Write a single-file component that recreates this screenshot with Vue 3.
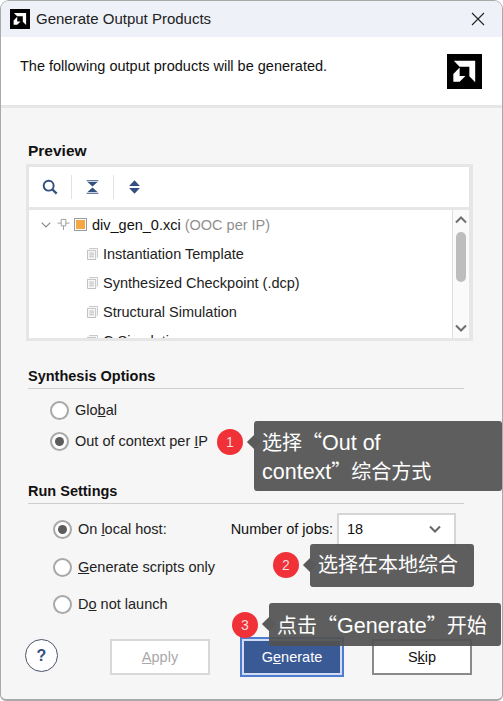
<template>
  <div class="win">
    <div class="titlebar">
      <svg class="logo-small" viewBox="0 0 36 36"><rect width="36" height="36" fill="#000"/><path d="M7 7h22v22l-6-6V13H13zM6.500 20.500L13 14v8.500h6l-6 6H6.500z" fill="#fff"/></svg>
      <span class="title">Generate Output Products</span>
      <svg class="close" viewBox="0 0 14 14"><path d="M1 1l12 12M13 1L1 13" stroke="#222" stroke-width="1.100" fill="none"/></svg>
    </div>
    <div class="header">
      <span>The following output products will be generated.</span>
      <svg class="logo-big" viewBox="0 0 36 36"><rect width="36" height="36" fill="#000"/><path d="M7 7h22v22l-6-6V13H13zM6.500 20.500L13 14v8.500h6l-6 6H6.500z" fill="#fff"/></svg>
    </div>

    <div class="body">
      <h3 class="preview-h">Preview</h3>
      <div class="panel">
        <div class="toolbar">
          <svg class="tool" viewBox="0 0 18 18"><circle cx="7.500" cy="7.500" r="5.600" fill="none" stroke="#34507f" stroke-width="2.200"/><path d="M11.500 11.500l5 5" stroke="#34507f" stroke-width="2.600"/></svg>
          <i class="tsep"></i>
          <svg class="tool narrow" viewBox="0 0 18 18"><path d="M2 1.500h14M2 16.500h14" stroke="#34507f" stroke-width="1.400"/><path d="M3 3h12L9 8.300zM9 9.700l6 5.300H3z" fill="#34507f"/></svg>
          <i class="tsep"></i>
          <svg class="tool narrow" viewBox="0 0 18 18"><path d="M9 1l6.500 6.800h-13zM2.500 10.200h13L9 17z" fill="#34507f"/></svg>
        </div>
        <div class="tree">
          <div class="rows">
            <div class="row root">
              <svg class="chev" viewBox="0 0 10 6"><path d="M.700.700L5 5l4.300-4.300" fill="none" stroke="#8a8a8a" stroke-width="1.200"/></svg>
              <svg class="pin" viewBox="0 0 14 14"><path d="M4.500 1.500h5v7h-5zM7 8.500V13M.500 5.500h4M9.500 5.500h4" fill="none" stroke="#9a9a9a"/></svg>
              <span class="ipbox"><i></i></span>
              <span>div_gen_0.xci <em>(OOC per IP)</em></span>
            </div>
            <div v-for="item in products" :key="item" class="row child">
              <svg class="doc" viewBox="0 0 12 13"><path d="M2.500.500h9v10" fill="none" stroke="#c4c4c4"/><path d="M.500 2.500h9v10h-9z" fill="#f7f7f7" stroke="#b9b9b9"/><path d="M2.500 5.500h5M2.500 7.500h5M2.500 9.500h5" stroke="#b9b9b9"/></svg>
              <span>{{ item }}</span>
            </div>
          </div>
          <div class="scroll">
            <svg viewBox="0 0 12 8"><path d="M1 6.500L6 1.500l5 5" fill="none" stroke="#6e6e6e" stroke-width="2"/></svg>
            <div class="thumb"></div>
            <svg class="down" viewBox="0 0 12 8"><path d="M1 1.500l5 5 5-5" fill="none" stroke="#6e6e6e" stroke-width="2"/></svg>
          </div>
        </div>
      </div>

      <h3 class="section synth">Synthesis Options</h3>
      <div class="options">
        <label class="radio"><i class="dot"></i><span>Glo<u>b</u>al</span></label>
        <label class="radio"><i class="dot on"></i><span>Out of context per <u>I</u>P</span></label>
      </div>

      <h3 class="section run">Run Settings</h3>
      <div class="run-grid">
        <div class="run-row">
          <label class="radio"><i class="dot on"></i><span>On <u>l</u>ocal host:</span></label>
          <div class="jobs">
            <span>Number of jobs:</span>
            <div class="select">18
              <svg viewBox="0 0 12 8"><path d="M1 1.500l5 5 5-5" fill="none" stroke="#666" stroke-width="2"/></svg>
            </div>
          </div>
        </div>
        <label class="radio second"><i class="dot"></i><span><u>G</u>enerate scripts only</span></label>
        <label class="radio third"><i class="dot"></i><span>D<u>o</u> not launch</span></label>
      </div>

      <div class="footer">
        <div class="help">?</div>
        <button class="btn apply"><u>A</u>pply</button>
        <button class="btn primary">G<u>e</u>nerate</button>
        <button class="btn skip">S<u>k</u>ip</button>
      </div>
    </div>

    <div class="badge b1">1</div>
    <div class="note n1">选择<span class="q open">“</span><span class="en">Out of context</span><span class="q">”</span>综合方式</div>
    <div class="badge b2">2</div>
    <div class="note n2">选择在本地综合</div>
    <div class="badge b3">3</div>
    <div class="note n3">点击<span class="q open">“</span><span class="en">Generate</span><span class="q">”</span>开始</div>
  </div>
</template>

<script setup>
const products = [
  'Instantiation Template',
  'Synthesized Checkpoint (.dcp)',
  'Structural Simulation',
  'C Simulation',
]
</script>

<style>
html, body { margin: 0; background: #fff; }
</style>

<style scoped>
* { box-sizing: border-box; }

.win {
  position: relative;
  width: 503px;
  height: 701px;
  overflow: hidden;
  border: 1px solid #a9a9a9;
  border-bottom-width: 2px;
  border-radius: 9px 9px 6px 6px;
  background: #f6f6f6;
  font-family: "Liberation Sans", Arial, sans-serif;
  font-size: 14.5px;
  color: #111;
  display: flex;
  flex-direction: column;
}

.titlebar {
  height: 36px;
  flex: none;
  background: #eef1f7;
  display: flex;
  align-items: center;
  padding: 0 17px 0 9px;
  gap: 6px;
}
.logo-small { width: 20px; height: 20px; }
.title { flex: 1; font-size: 15px; color: #222; margin-top: -2px; }
.close { width: 14px; height: 14px; }

.header {
  height: 71px;
  flex: none;
  background: #fff;
  border-bottom: 3px solid #e6e6e6;
  display: flex;
  justify-content: space-between;
  padding: 21px 20px 0 19px;
}
.logo-big { width: 35px; height: 35px; margin-top: -4px; }

.body { flex: 1; padding: 0 26px; display: flex; flex-direction: column; }

h3 { margin: 0; font-size: 14.5px; font-weight: 700; }
.preview-h { margin: 35px 0 0 1px; line-height: 16px; font-size: 15.500px; }

.panel {
  margin: 5px 0 0 -1px;
  width: 447px;
  height: 177px;
  flex: none;
  border: 3px solid #e6e6e6;
  border-right-width: 4px;
  background: #fff;
}
.toolbar {
  height: 43px;
  border-bottom: 3px solid #e6e6e6;
  display: flex;
  align-items: center;
  padding-left: 13px;
  gap: 13px;
}
.tool { width: 16px; height: 16px; }
.tool.narrow { width: 15px; }
.tsep { width: 1px; height: 24px; background: #e2e2e2; }

.tree { display: flex; height: 128px; overflow: hidden; }
.rows { flex: 1; }
.row { height: 29px; display: flex; align-items: center; white-space: nowrap; }
.root { padding-left: 12px; }
.chev { width: 10px; height: 6px; margin-right: 6px; }
.pin { width: 13px; height: 13px; margin-right: 4px; }
.ipbox {
  width: 13px;
  height: 13px;
  border: 1px solid #9c9c9c;
  margin-right: 5px;
  background: #fff;
  padding: 1px;
}
.ipbox i { display: block; width: 9px; height: 9px; background: #f5a742; }
em { font-style: normal; color: #8f8f8f; }
.child { padding-left: 58px; gap: 5px; color: #222; }
.doc { width: 11px; height: 12px; flex: none; }

.scroll {
  width: 17px;
  flex: none;
  border-left: 1px solid #dedede;
  background: #fafafa;
  display: flex;
  flex-direction: column;
  align-items: center;
  padding-top: 6px;
}
.scroll svg { width: 12px; height: 8px; flex: none; }
.thumb { width: 10px; height: 50px; margin-top: 8px; border-radius: 5px; background: #bdbdbd; }
.scroll .down { margin-top: 42px; }

.section {
  line-height: 16px;
  width: 436px;
  margin-left: 1px;
  padding-bottom: 4px;
  border-bottom: 1px solid #cfcfcf;
}
.synth { margin-top: 27px; }
.run { margin-top: 32px; }

.options { display: flex; flex-direction: column; gap: 11px; margin: 11px 0 0 23px; }

.radio { display: flex; align-items: center; gap: 6px; height: 20px; white-space: nowrap; color: #222; }
.dot {
  width: 19px;
  height: 19px;
  flex: none;
  border: 2px solid #a8a8a8;
  border-radius: 50%;
  background: #fff;
  display: flex;
  align-items: center;
  justify-content: center;
}
.dot.on::after {
  content: "";
  width: 9px;
  height: 9px;
  border-radius: 50%;
  background: #5c5c5c;
}

.run-grid { margin-left: 26px; display: flex; flex-direction: column; }
.run-row { display: flex; align-items: center; justify-content: space-between; width: 403px; margin-top: 8px; height: 34px; }
.jobs { display: flex; align-items: center; gap: 4px; }
.select {
  width: 119px;
  height: 33px;
  background: #fff;
  border: 2px solid #d6d6d6;
  display: flex;
  align-items: center;
  justify-content: space-between;
  padding: 0 13px 0 8px;
}
.select svg { width: 12px; height: 8px; }
.second { margin-top: 11px; }
.third { margin-top: 17px; }

.footer { display: flex; align-items: center; margin-top: 25px; margin-left: -2px; }
.help {
  width: 33px;
  height: 33px;
  margin-top: -3px;
  border: 1px solid #4a5568;
  border-radius: 50%;
  background: #fff;
  color: #34507f;
  font-weight: 700;
  font-size: 16px;
  display: flex;
  align-items: center;
  justify-content: center;
}
.btn {
  width: 100px;
  height: 36px;
  font: inherit;
  background: #fff;
  border: 2px solid #d8d8d8;
  padding: 0;
}
.apply { margin-left: 52px; color: #a8a8a8; }
.primary {
  margin-left: 32px;
  color: #fff;
  background: #3a5a96;
  border: 2px solid #cfdcf3;
  outline: 2px solid #4f7bd0;
}
.skip { margin-left: 30px; border-color: #8a8a8a; color: #111; }

.badge {
  position: absolute;
  width: 26px;
  height: 26px;
  border-radius: 50%;
  background: #f03238;
  color: #f6dcdc;
  font-size: 14px;
  display: flex;
  align-items: center;
  justify-content: center;
  z-index: 2;
}
.b1 { left: 216px; top: 428px; }
.b2 { left: 272px; top: 551px; }
.b3 { left: 231px; top: 611px; }

.note {
  position: absolute;
  background: rgba(82, 82, 82, .93);
  color: #fff;
  border-radius: 3px;
  font-family: "Liberation Sans", "Noto Sans CJK SC", sans-serif;
  font-size: 20px;
  line-height: 27px;
  z-index: 2;
}
.note::before {
  content: "";
  position: absolute;
  left: -5px;
  top: 16px;
  width: 10px;
  height: 10px;
  background: #5a5a5a;
  transform: rotate(45deg);
}
.en { font-size: 21.500px; }
.q { display: inline-block; width: 20px; font-family: "Noto Sans CJK SC", sans-serif; }
.q.open { text-align: right; }
.n1 { left: 253px; top: 420px; width: 248px; height: 70px; padding: 7px 60px 0 8px; }
.n2 { left: 309px; top: 543px; width: 164px; height: 43px; padding: 8px 8px; white-space: nowrap; }
.n3 { left: 268px; top: 602px; width: 232px; height: 43px; padding: 8px 8px; white-space: nowrap; }
</style>
